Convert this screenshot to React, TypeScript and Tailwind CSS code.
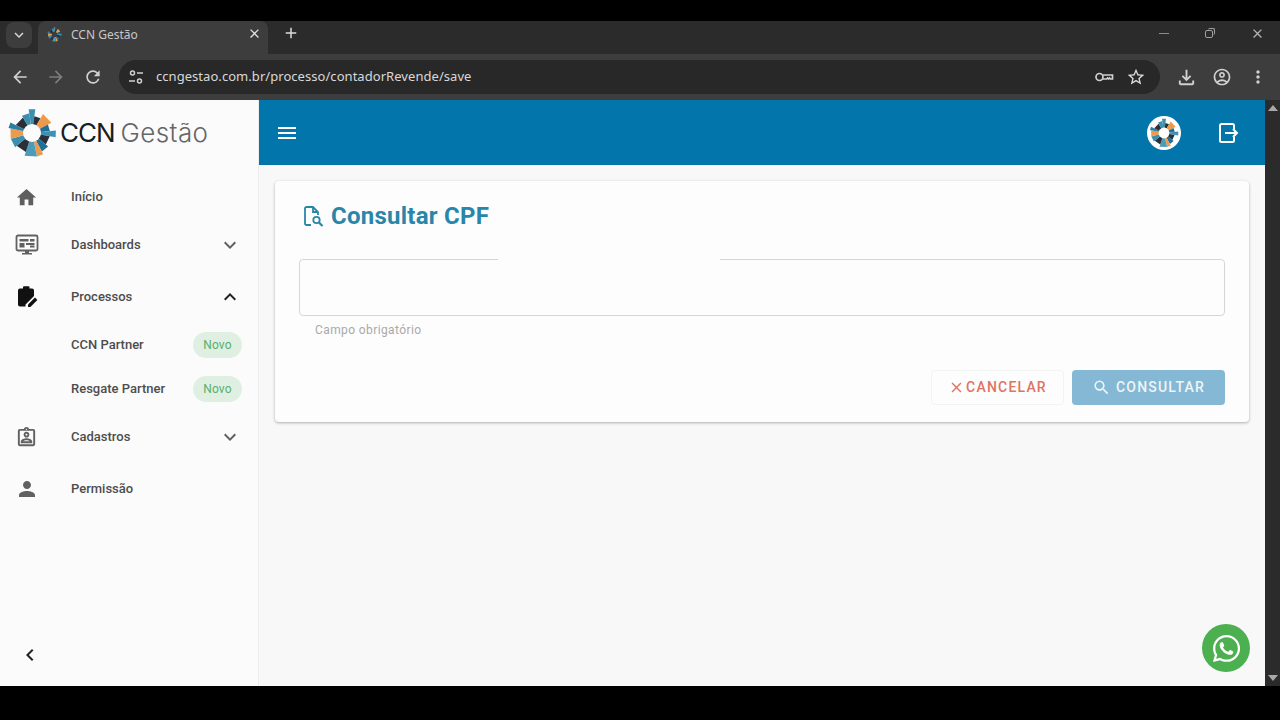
import React from "react";
import {
  MdArrowBack,
  MdArrowForward,
  MdClose,
  MdExpandLess,
  MdExpandMore,
  MdHome,
  MdKeyboardArrowDown,
  MdMenu,
  MdMoreVert,
  MdOutlineAccountCircle,
  MdOutlineAssignmentInd,
  MdOutlineFileDownload,
  MdOutlineStarBorder,
  MdPerson,
  MdRefresh,
  MdSearch,
  MdChevronLeft,
  MdAdd,
} from "react-icons/md";
import { FaWhatsapp } from "react-icons/fa";

// wedges of the round logo: start angle, end angle, outer radius, colour
const wedges: [number, number, number, string][] = [
  [-98, -82, 24, "#3d8fb0"],
  [-82, -60, 17, "#2b2f36"],
  [-60, -28, 22, "#ec9b4c"],
  [-28, -6, 18, "#1f6f97"],
  [-6, 10, 24, "#3a93b5"],
  [10, 40, 18, "#2b2f36"],
  [40, 62, 21, "#1f6f97"],
  [62, 78, 24, "#ec9b4c"],
  [78, 108, 24, "#4a9cb9"],
  [108, 140, 20, "#2b2f36"],
  [140, 165, 22, "#3d8fb0"],
  [165, 192, 22, "#ec9b4c"],
  [192, 206, 24, "#2b7fa5"],
  [206, 240, 18, "#2b2f36"],
  [240, 262, 20, "#3d8fb0"],
];

const wedgePath = (a: number, b: number, r: number, inner: number) => {
  const p = (ang: number, rad: number) => {
    const t = (ang * Math.PI) / 180;
    return `${(25 + rad * Math.cos(t)).toFixed(2)} ${(25 + rad * Math.sin(t)).toFixed(2)}`;
  };
  return `M${p(a, inner)}L${p(a, r)}L${p(b, r)}L${p(b, inner)}Z`;
};

const Logo = ({ size, hole }: { size: number; hole: string }) => (
  <svg width={size} height={size} viewBox="0 0 50 50">
    {wedges.map(([a, b, r, c], i) => (
      <path key={i} d={wedgePath(a, b, r, 7)} fill={c} />
    ))}
    <circle cx="25" cy="25" r="9" fill={hole} />
  </svg>
);

const DashIcon = () => (
  <svg width="24" height="24" viewBox="0 0 24 24" fill="none">
    <rect x="1.500" y="2.500" width="21" height="15" rx="1.500" stroke="#616161" strokeWidth="1.800" />
    <path d="M4.500 6h9v2.500h-9zM15 6h4.500v2.500H15zM4.500 10h5v4.500h-5zM11 10h8.500v2H11zM15 12.500h4.500v2H15z" fill="#616161" />
    <path d="M10 18h4v2h3v1.500H7V20h3z" fill="#616161" />
  </svg>
);

const ProcessIcon = () => (
  <svg width="24" height="24" viewBox="0 0 24 24">
    <path
      d="M5 3.500h3V2.200a1 1 0 0 1 1-1h4.500a1 1 0 0 1 1 1V3.500H17a2 2 0 0 1 2 2v5.500l-8.500 8.500V21.500H5a2 2 0 0 1-2-2v-14a2 2 0 0 1 2-2z"
      fill="#111"
    />
    <path d="M13 22v-2.400l7-7 2.400 2.400-7 7z" fill="#111" />
  </svg>
);

const Item = ({
  icon,
  label,
  chevron,
}: {
  icon: React.ReactNode;
  label: string;
  chevron?: "up" | "down";
}) => (
  <div className="flex h-12 items-center">
    <div className="flex w-[53px] justify-center">{icon}</div>
    <span className="ml-[18px] flex-1 text-[13px] font-medium text-[#4d4d4d]">{label}</span>
    {chevron === "down" && <MdExpandMore className="mr-4 text-[#616161]" size={24} />}
    {chevron === "up" && <MdExpandLess className="mr-4 text-[#212121]" size={24} />}
  </div>
);

const SubItem = ({ label }: { label: string }) => (
  <div className="flex h-11 items-center pl-[71px] pr-4">
    <span className="flex-1 text-[13px] font-medium text-[#4d4d4d]">{label}</span>
    <span className="flex h-[26px] w-[49px] items-center justify-center rounded-full bg-[#dff0e3] text-[12px] tracking-[0.2px] text-[#5cad6f]">
      Novo
    </span>
  </div>
);

const Sidebar = () => (
  <aside className="flex w-[259px] shrink-0 flex-col border-r border-[#ececec] bg-[#fbfbfb]">
    <div className="flex h-[65px] items-center pl-[7px]">
      <Logo size={50} hole="#fbfbfb" />
      <span className="ml-[3px] font-['Inter',sans-serif] text-[26px] tracking-[-1px] text-[#1c1c1c]">CCN</span>
      <span className="ml-[6px] font-['Inter',sans-serif] text-[26px] font-light tracking-[0.4px] text-[#666]">
        Gestão
      </span>
    </div>
    <nav className="flex flex-1 flex-col gap-1 pt-2">
      <div>
        <Item icon={<MdHome size={23} className="text-[#5f5f5f]" />} label="Início" />
        <Item icon={<DashIcon />} label="Dashboards" chevron="down" />
      </div>
      <Item icon={<ProcessIcon />} label="Processos" chevron="up" />
      <div className="-my-0.5">
        <SubItem label="CCN Partner" />
        <SubItem label="Resgate Partner" />
      </div>
      <Item icon={<MdOutlineAssignmentInd size={23} className="text-[#616161]" />} label="Cadastros" chevron="down" />
      <Item icon={<MdPerson size={24} className="text-[#616161]" />} label="Permissão" />
    </nav>
    <div className="flex h-[45px] items-start pl-[18px] pt-[2px]">
      <MdChevronLeft size={24} className="text-[#212121]" />
    </div>
  </aside>
);

const ExitIcon = () => (
  <svg width="24" height="24" viewBox="0 0 24 24" fill="none" stroke="#fff" strokeWidth="2">
    <path d="M18 8V4.500A1.500 1.500 0 0 0 16.500 3H5.500A1.500 1.500 0 0 0 4 4.500v15A1.500 1.500 0 0 0 5.500 21h11a1.500 1.500 0 0 0 1.500-1.500V16" />
    <path d="M9 12h12M17 8l4 4-4 4" />
  </svg>
);

const FileSearchIcon = () => (
  <svg width="24" height="24" viewBox="0 0 24 24" fill="none" stroke="#2a86a8" strokeWidth="1.800">
    <path d="M10 21H5.500A1.500 1.500 0 0 1 4 19.500v-15A1.500 1.500 0 0 1 5.500 3H12l5 5v3" />
    <path d="M12 3v5h5" />
    <circle cx="15.500" cy="16" r="3.200" />
    <path d="M18 18.500l3.500 3.500" strokeWidth="2.200" />
  </svg>
);

const Content = () => (
  <main className="relative flex min-w-0 flex-1 flex-col bg-[#f8f8f8]">
    <header className="flex h-[65px] shrink-0 items-center justify-between bg-[#0276aa] pl-4 pr-[25px]">
      <MdMenu size={24} className="text-white" />
      <div className="flex items-center gap-[35px]">
        <div className="flex h-[34px] w-[34px] items-center justify-center rounded-full bg-white">
          <Logo size={30} hole="#ffffff" />
        </div>
        <ExitIcon />
      </div>
    </header>
    <div className="px-4 pt-4">
      <section className="h-[241px] rounded-[4px] bg-[#fdfdfd] px-6 pt-[21px] shadow-[0_1px_3px_rgba(0,0,0,0.3)]">
        <div className="flex h-[28px] items-center pl-[2px]">
          <FileSearchIcon />
          <h1 className="ml-[6px] text-[24px] font-bold leading-7 tracking-[0.25px] text-[#2a86a8]">Consultar CPF</h1>
        </div>
        <div className="relative mt-[29px] h-[57px] rounded-[4px] border border-[#d6d6d6]">
          <span className="absolute -top-px left-[198px] h-[2px] w-[222px] bg-[#fdfdfd]" />
        </div>
        <p className="mt-[6px] pl-4 text-[12px] leading-4 tracking-[0.4px] text-[#a9a9a9]">Campo obrigatório</p>
        <div className="mt-[32px] flex justify-end gap-2">
          <button className="flex h-[35px] w-[133px] items-center justify-center gap-px rounded-[4px] border border-[#f3f3f3] text-[14px] font-medium tracking-[1.2px] text-[#e0745f]">
            <MdClose size={17} />
            CANCELAR
          </button>
          <button className="flex h-[35px] w-[153px] items-center justify-center gap-[5px] rounded-[4px] bg-[#84b8d4] text-[14px] font-medium tracking-[1.2px] text-[#eef5f9]">
            <MdSearch size={19} />
            CONSULTAR
          </button>
        </div>
      </section>
    </div>
    <div className="absolute bottom-[14px] right-[15px] flex h-12 w-12 items-center justify-center rounded-full bg-[#4caf50]">
      <FaWhatsapp size={31} className="text-white" />
    </div>
  </main>
);

const Browser = () => (
  <div className="font-['Noto_Sans',sans-serif] text-[#d6d6d6]">
    <div className="flex h-[33px] items-start bg-[#2b2b2b] pl-[6px]">
      <div className="mt-px flex h-[26px] w-[26px] items-center justify-center rounded-lg bg-[#3d3d3d]">
        <MdKeyboardArrowDown size={18} />
      </div>
      <div className="ml-[6px] flex h-[33px] w-[230px] items-center rounded-t-lg bg-[#3d3d3d] pb-[6px] pl-[9px] pr-[6px]">
        <Logo size={15} hole="#3d3d3d" />
        <span className="ml-[9px] flex-1 text-[12px] text-[#c8c8c8]">CCN Gestão</span>
        <MdClose size={15} className="mb-[2px] text-[#e4e4e4]" />
      </div>
      <MdAdd size={18} className="ml-[14px] mt-[3px] text-[#dcdcdc]" />
      <div className="flex-1" />
      <div className="mt-[5px] flex w-[124px] items-center pr-3 text-[#a8a8a8]">
        <span className="ml-[3px] h-px w-[10px] bg-[#8a8a8a]" />
        <span className="relative ml-[36px] h-[8px] w-[8px] rounded-[2px] border border-[#a0a0a0]">
          <span className="absolute -right-[3px] -top-[3px] h-[7px] w-[7px] rounded-[2px] border-r border-t border-[#a0a0a0]" />
        </span>
        <MdClose size={15} className="ml-[37px] text-[#b4b4b4]" />
      </div>
    </div>
    <div className="flex h-[46px] items-center bg-[#3d3d3d] pl-[10px]">
      <MdArrowBack size={20} className="text-[#d0d0d0]" />
      <MdArrowForward size={20} className="ml-[16px] text-[#7c7c7c]" />
      <MdRefresh size={20} className="ml-[17px] text-[#d0d0d0]" />
      <div className="ml-[16px] flex h-[34px] w-[1041px] items-center rounded-full bg-[#282828] pl-[8px] pr-[14px]">
        <svg width="18" height="18" viewBox="0 0 18 18" fill="none" stroke="#d0d0d0" strokeWidth="1.500">
          <circle cx="5.500" cy="5" r="2" />
          <path d="M10 5h6M2 13h6" />
          <circle cx="12.500" cy="13" r="2" />
        </svg>
        <span className="ml-[11px] flex-1 text-[13px] tracking-[0.05px] text-[#d8d8d8]">
          ccngestao.com.br/processo/contadorRevende/save
        </span>
        <svg width="20" height="20" viewBox="0 0 20 20" fill="none" stroke="#d0d0d0" strokeWidth="1.700">
          <circle cx="5.500" cy="10" r="3.500" />
          <path d="M9 8h9.500v4h-2l-1-1-1 1-1-1-1 1H9" />
        </svg>
        <MdOutlineStarBorder size={20} className="ml-[12px] text-[#dcdcdc]" />
      </div>
      <MdOutlineFileDownload size={23} className="ml-[15px] text-[#d0d0d0]" />
      <MdOutlineAccountCircle size={20} className="ml-[14px] text-[#d0d0d0]" />
      <MdMoreVert size={20} className="ml-[16px] text-[#d0d0d0]" />
    </div>
  </div>
);

const Scrollbar = () => (
  <div className="flex w-[15px] shrink-0 flex-col items-center justify-between bg-[#2b2b2b] py-[5px]">
    <span className="h-0 w-0 border-x-[5px] border-b-[6px] border-x-transparent border-b-[#a8a8a8]" />
    <span className="h-0 w-0 border-x-[5px] border-t-[6px] border-x-transparent border-t-[#a8a8a8]" />
  </div>
);

export default function App() {
  return (
    <div className="flex h-[720px] w-[1280px] flex-col overflow-hidden bg-black font-['Roboto',sans-serif]">
      <div className="h-[21px] shrink-0" />
      <Browser />
      <div className="flex h-[586px] shrink-0">
        <Sidebar />
        <Content />
        <Scrollbar />
      </div>
    </div>
  );
}
